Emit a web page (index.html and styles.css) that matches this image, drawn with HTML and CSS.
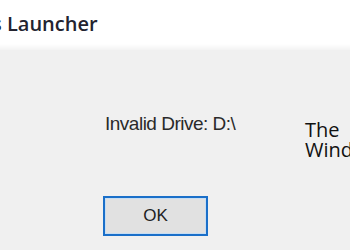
FILE: index.html
```html
<!DOCTYPE html>
<html>
<head>
<meta charset="utf-8">
<link rel="stylesheet" href="styles.css">
</head>
<body>
<div class="screen">
  <header class="titlebar"><span class="title">s Launcher</span></header>
  <main class="area">
    <section class="dialog">
      <p class="message">Invalid Drive: D:\</p>
      <button class="ok">OK</button>
    </section>
    <aside class="behind"><span class="line">The</span><span class="line">Wind</span></aside>
  </main>
</div>
</body>
</html>
```
FILE: styles.css
```css
html, body {
  margin: 0;
  padding: 0;
}
body {
  width: 350px;
  height: 250px;
  overflow: hidden;
  background: #f0f0f0;
}
.screen {
  display: flex;
  flex-direction: column;
  width: 350px;
  height: 250px;
  overflow: hidden;
}
.titlebar {
  height: 50px;
  flex: none;
  background: linear-gradient(#ffffff 0, #ffffff 44px, #f3f3f3 50px);
  display: flex;
  align-items: flex-start;
  overflow: hidden;
}
.title {
  margin: 10px 0 0 -8px;
  font-family: "Open Sans", "Noto Sans", sans-serif;
  font-size: 20px;
  font-weight: 600;
  line-height: 28px;
  color: #23232f;
  white-space: nowrap;
}
.area {
  flex: 1;
  display: flex;
  overflow: hidden;
}
.dialog {
  width: 305px;
  flex: none;
  display: flex;
  flex-direction: column;
  align-items: flex-start;
}
.message {
  margin: 62px 0 0 105px;
  font-family: "Liberation Sans", Arial, sans-serif;
  font-size: 19px;
  line-height: 24px;
  color: #2a2a2a;
  letter-spacing: -0.5px;
  white-space: nowrap;
}
.ok {
  margin: 60px 0 0 103px;
  width: 105px;
  height: 40px;
  box-sizing: border-box;
  border: 2px solid #1a6fc9;
  box-shadow: inset 0 0 0 1px #c6ddf3;
  background: #e1e1e1;
  font-family: "Liberation Sans", Arial, sans-serif;
  font-size: 17px;
  color: #222;
  padding: 0;
}
.behind {
  flex: none;
  padding-top: 70px;
  display: flex;
  flex-direction: column;
  font-family: "Open Sans", "Noto Sans", sans-serif;
  font-size: 20px;
  line-height: 20px;
  color: #111;
  white-space: nowrap;
}
.line {
  display: block;
  height: 20px;
}
```
